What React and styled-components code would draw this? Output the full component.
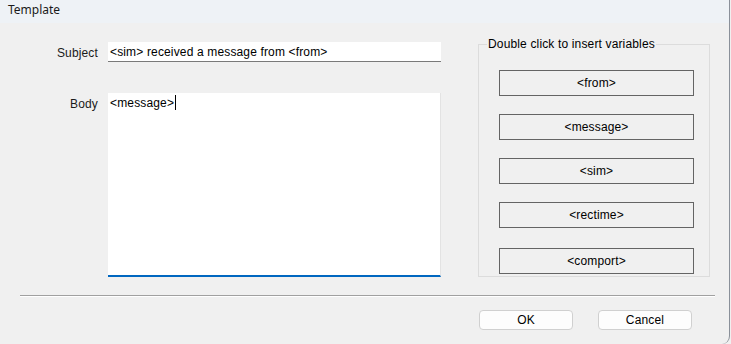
import React from 'react';
import styled, { createGlobalStyle } from 'styled-components';

const GlobalStyle = createGlobalStyle`
  html, body {
    margin: 0;
    padding: 0;
    background: #f0f0f0;
  }
  body {
    font-family: "Liberation Sans", Arial, sans-serif;
    font-size: 12px;
    letter-spacing: 0.15px;
    color: #000;
  }
`;

const Window = styled.div`
  width: 730px;
  height: 344px;
  box-sizing: border-box;
  border-right: 1px solid #8a9099;
  border-bottom-right-radius: 8px;
  background: #f0f0f0;
  display: flex;
  flex-direction: column;
  overflow: hidden;
`;

const TitleBar = styled.div`
  height: 23px;
  flex: none;
  background: #eef2f6;
  font-family: "Noto Sans", "Open Sans", sans-serif;
  font-size: 12px;
  letter-spacing: 0;
  line-height: 20px;
  padding-left: 8px;
  color: #1a1a1a;
`;

const Body = styled.div`
  display: flex;
  align-items: flex-start;
  padding-top: 19px;
  height: 236px;
  flex: none;
`;

const Form = styled.div`
  display: grid;
  grid-template-columns: 98px 333px;
  grid-template-rows: 20px 184px;
  column-gap: 10px;
  row-gap: 31px;
  width: 441px;
`;

const Label = styled.div`
  text-align: right;
  font-size: 12px;
  line-height: 18px;
  padding-top: ${p => (p.top ? '2px' : '2px')};
  color: #1a1a1a;
`;

const TextInput = styled.div`
  background: #fff;
  border-bottom: 1px solid #7a7a7a;
  box-sizing: border-box;
  padding-left: 2px;
  line-height: 20px;
  white-space: nowrap;
`;

const TextArea = styled.div`
  background: #fff;
  border-right: 1px solid #e3e3e3;
  border-bottom: 2px solid #0067c0;
  box-sizing: border-box;
  padding: 2px 2px;
  line-height: 16px;
`;

const Caret = styled.span`
  display: inline-block;
  width: 1px;
  height: 15px;
  margin-left: 1px;
  background: #000;
  vertical-align: -3px;
`;

const Group = styled.div`
  position: relative;
  margin: 2px 0 0 37px;
  padding: 25px 0 0 20px;
  width: 232px;
  height: 233px;
  box-sizing: border-box;
  border: 1px solid #dcdcdc;
`;

const GroupTitle = styled.span`
  position: absolute;
  top: -8px;
  left: 8px;
  padding: 0 1px;
  background: #f0f0f0;
  font-size: 12px;
  line-height: 14px;
`;

const VarList = styled.div`
  display: flex;
  flex-direction: column;
  gap: 18px;
`;

const VarButton = styled.div`
  width: 195px;
  height: 26px;
  box-sizing: border-box;
  border: 1px solid #646464;
  background: #f0f0f0;
  text-align: center;
  line-height: 25px;
  font-size: 12px;
  margin-top: ${p => (p.extra ? '2px' : '0')};
`;

const Separator = styled.div`
  flex: none;
  margin: 17px 14px 0 20px;
  height: 1px;
  background: #a0a0a0;
  border-bottom: 1px solid #fff;
`;

const Footer = styled.div`
  display: flex;
  gap: 25px;
  padding: 13px 0 0 479px;
`;

const DialogButton = styled.div`
  width: 94px;
  height: 20px;
  box-sizing: border-box;
  border: 1px solid #d0d0d0;
  border-radius: 4px;
  background: #fdfdfd;
  text-align: center;
  line-height: 18px;
  font-size: 12px;
`;

const vars = ['<from>', '<message>', '<sim>', '<rectime>', '<comport>'];

export default function App() {
  return (
    <>
      <GlobalStyle />
      <Window>
        <TitleBar>Template</TitleBar>
        <Body>
          <Form>
            <Label>Subject</Label>
            <TextInput>{'<sim> received a message from <from>'}</TextInput>
            <Label top>Body</Label>
            <TextArea>
              {'<message>'}
              <Caret />
            </TextArea>
          </Form>
          <Group>
            <GroupTitle>Double click to insert variables</GroupTitle>
            <VarList>
              {vars.map((v, i) => (
                <VarButton key={v} extra={i === 4}>
                  {v}
                </VarButton>
              ))}
            </VarList>
          </Group>
        </Body>
        <Separator />
        <Footer>
          <DialogButton>OK</DialogButton>
          <DialogButton>Cancel</DialogButton>
        </Footer>
      </Window>
    </>
  );
}
